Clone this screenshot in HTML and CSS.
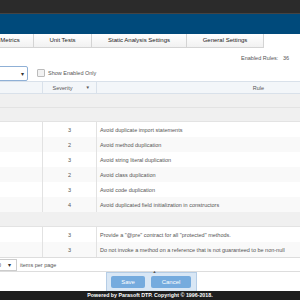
FILE: index.html
```html
<!DOCTYPE html>
<html lang="en">
<head>
    <meta charset="UTF-8">
    <title>Rule Settings</title>
    <link rel="stylesheet" href="styles.css">
</head>
<body>
    <div class="page">
        <div class="topbar"></div>
        <div class="brandbar"></div>

        <div class="tabs">
            <div class="tab tab-metrics">Metrics</div>
            <div class="tab tab-unit">Unit Tests</div>
            <div class="tab tab-static">Static Analysis Settings</div>
            <div class="tab tab-general">General Settings</div>
        </div>

        <div class="content">
            <div class="enabled-count">Enabled Rules: <span class="count">36</span></div>

            <div class="filters">
                <div class="select"><span class="arrow">&#9662;</span></div>
                <label class="check"><span class="box"></span>Show Enabled Only</label>
            </div>

            <div class="grid">
                <div class="row head">
                    <div class="cell c1"></div>
                    <div class="cell c2">Severity <span class="filter">&#9660;</span></div>
                    <div class="cell c3">Rule</div>
                </div>
                <div class="row group"></div>
                <div class="row group"></div>
                <div class="row"><div class="cell c1"></div><div class="cell c2">3</div><div class="cell c3">Avoid duplicate import statements</div></div>
                <div class="row alt"><div class="cell c1"></div><div class="cell c2">2</div><div class="cell c3">Avoid method duplication</div></div>
                <div class="row"><div class="cell c1"></div><div class="cell c2">3</div><div class="cell c3">Avoid string literal duplication</div></div>
                <div class="row alt"><div class="cell c1"></div><div class="cell c2">2</div><div class="cell c3">Avoid class duplication</div></div>
                <div class="row"><div class="cell c1"></div><div class="cell c2">3</div><div class="cell c3">Avoid code duplication</div></div>
                <div class="row alt"><div class="cell c1"></div><div class="cell c2">4</div><div class="cell c3">Avoid duplicated field initialization in constructors</div></div>
                <div class="row group tall"></div>
                <div class="row"><div class="cell c1"></div><div class="cell c2">3</div><div class="cell c3">Provide a "@pre" contract for all "protected" methods.</div></div>
                <div class="row alt"><div class="cell c1"></div><div class="cell c2">3</div><div class="cell c3">Do not invoke a method on a reference that is not guaranteed to be non-null</div></div>
            </div>

            <div class="pager">
                <div class="page-size">10 <span class="arrow">&#9662;</span></div>
                <span>items per page</span>
            </div>
        </div>

        <div class="actions">
            <div class="action-panel">
                <span class="caret">&#9650;</span>
                <button class="btn">Save</button>
                <button class="btn">Cancel</button>
            </div>
        </div>

        <div class="footer">Powered by Parasoft DTP. Copyright &copy; 1996-2018.</div>
    </div>
</body>
</html>
```

FILE: styles.css
```css
body {
    margin: 0;
    font-family: "Liberation Sans", Arial, sans-serif;
    color: #444;
}

.page {
    width: 300px;
    height: 300px;
    overflow: hidden;
}

.topbar {
    height: 13px;
    background-color: #2b2b2b;
    border-bottom: 1px solid #444;
}

.brandbar {
    height: 20px;
    background-color: #004a7b;
}

/* tabs */
.tabs {
    display: flex;
    height: 14px;
    margin-left: -13px;
}

.tab {
    box-sizing: border-box;
    height: 14px;
    line-height: 13px;
    font-size: 6px;
    color: #222;
    text-align: center;
    background: linear-gradient(#ffffff, #f1f1f1);
    border: 1px solid #d4d4d4;
    border-top: none;
    border-left: none;
    flex-shrink: 0;
}

.tab-metrics { width: 47px; }
.tab-unit { width: 58px; }
.tab-static { width: 95px; }
.tab-general { width: 77px; }

/* filters */
.content {
    font-size: 5.5px;
}

.enabled-count {
    text-align: right;
    padding: 7px 11px 0 0;
    height: 10px;
    color: #555;
}

.enabled-count .count {
    margin-left: 3px;
}

.filters {
    display: flex;
    align-items: center;
    height: 16px;
}

.select {
    box-sizing: border-box;
    width: 38px;
    height: 15px;
    margin-left: -10px;
    border: 1px solid #8fb0d6;
    border-radius: 2px;
    position: relative;
}

.select .arrow {
    position: absolute;
    right: 3px;
    top: 3px;
    font-size: 6px;
    color: #333;
}

.check {
    display: flex;
    align-items: center;
    margin-left: 9px;
    font-size: 5.5px;
    color: #555;
}

.check .box {
    width: 6px;
    height: 6px;
    border: 1px solid #bbb;
    background: #f2f2f2;
    border-radius: 1px;
    margin-right: 3px;
}

/* grid */
.grid {
    width: 430px;
    margin-left: -10px;
    border-top: 1px solid #d9e1ea;
}

.row {
    display: flex;
    height: 15px;
    background: #fff;
}

.row.alt {
    background: #f9f9f9;
}

.row.head {
    height: 11px;
    background: #f3f6f9;
    border-bottom: 1px solid #d9e1ea;
    color: #666;
}

.row.group {
    height: 13px;
    background: #f0f0f0;
    border-bottom: 1px solid #e3e3e3;
}

.row.group.tall {
    height: 14px;
}

.cell {
    box-sizing: border-box;
    display: flex;
    align-items: center;
    color: #555;
    border-right: 1px solid #e2e2e2;
}

.c1 { width: 53px; }

.c2 {
    width: 54px;
    justify-content: center;
    position: relative;
}

.c3 {
    width: 323px;
    padding-left: 3px;
    border-right: none;
}

.head .c2 {
    padding-right: 14px;
    border-right-color: #d9e1ea;
}

.head .c1 {
    border-right-color: #d9e1ea;
}

.head .c3 {
    justify-content: center;
    padding-left: 0;
}

.filter {
    position: absolute;
    right: 6px;
    top: 3px;
    font-size: 4.5px;
    color: #555;
}

.pager {
    display: flex;
    align-items: center;
    height: 13px;
    border-top: 1px solid #ddd;
    border-bottom: 1px solid #ddd;
    color: #555;
}

.page-size {
    box-sizing: border-box;
    width: 26px;
    height: 12px;
    margin-left: -9px;
    border: 1px solid #ccc;
    border-left: none;
    display: flex;
    align-items: center;
    padding-left: 4px;
    gap: 4px;
}

.page-size .arrow {
    font-size: 6px;
    color: #333;
}

.pager span {
    margin-left: 3px;
}

/* actions */
.actions {
    height: 19px;
    display: flex;
    justify-content: center;
}

.action-panel {
    box-sizing: border-box;
    width: 91px;
    height: 19px;
    margin-left: 2px;
    background: #d9e7f5;
    border: 1px solid #b5cde6;
    border-bottom: none;
    display: flex;
    align-items: center;
    justify-content: center;
    gap: 6px;
    position: relative;
}

.caret {
    position: absolute;
    top: -4px;
    left: 46px;
    font-size: 4px;
    color: #555;
}

.btn {
    border: none;
    border-radius: 2px;
    background: #75abde;
    color: #fff;
    font-family: "Liberation Sans", Arial, sans-serif;
    font-size: 6px;
    height: 12px;
    padding: 0;
}

.btn:first-of-type { width: 34px; }
.btn:last-of-type { width: 40px; }

.footer {
    height: 9px;
    line-height: 9px;
    background: #1e1e1e;
    color: #fff;
    font-size: 5.3px;
    font-weight: bold;
    text-align: center;
}
```
